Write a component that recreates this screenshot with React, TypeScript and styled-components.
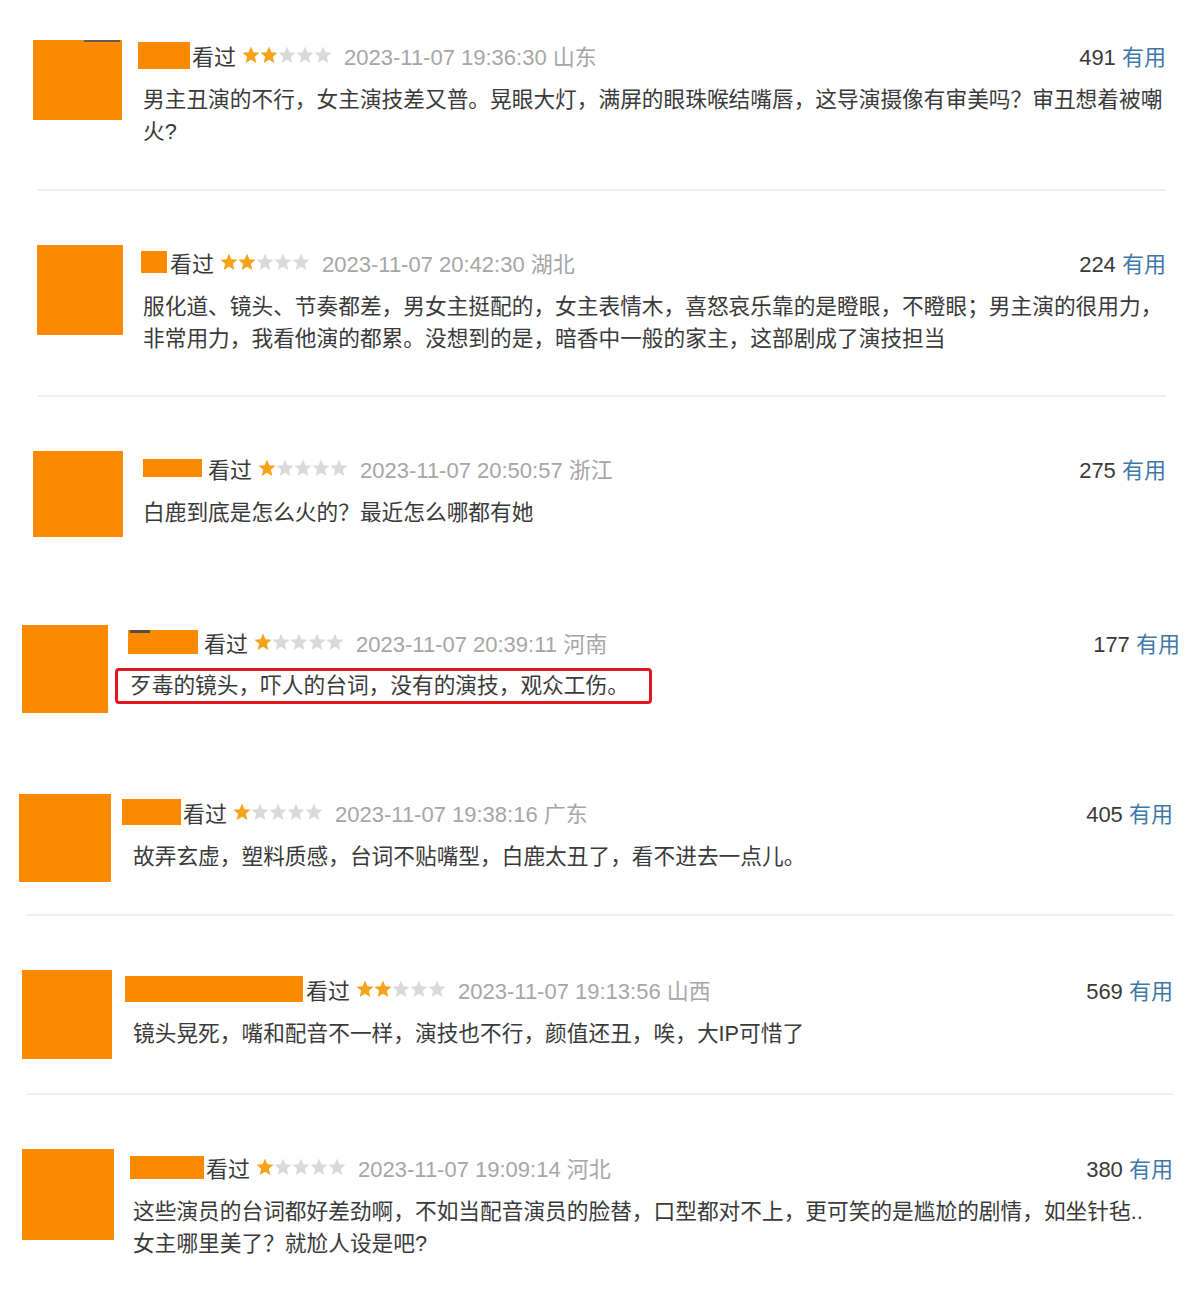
import styled, { createGlobalStyle } from "styled-components";

const GlobalStyle = createGlobalStyle`
  body {
    margin: 0;
    background: #fff;
    font-family: "Liberation Sans", "Noto Sans CJK SC", sans-serif;
  }
`;

const Page = styled.div`
  width: 1200px;
  padding-top: 40px;
  display: flex;
  flex-direction: column;
`;

const Item = styled.div<{ $height: number }>`
  height: ${(p) => p.$height}px;
  display: flex;
  flex-direction: column;
`;

const Row = styled.div<{ $left: number; $right: number }>`
  display: flex;
  align-items: flex-start;
  padding-left: ${(p) => p.$left}px;
  padding-right: ${(p) => 1200 - p.$right}px;
`;

const Avatar = styled.div<{ $w: number; $h: number; $mark?: boolean }>`
  position: relative;
  flex-shrink: 0;
  width: ${(p) => p.$w}px;
  height: ${(p) => p.$h}px;
  background: #fb8a00;

  &::before {
    content: "";
    display: ${(p) => (p.$mark ? "block" : "none")};
    position: absolute;
    top: 0;
    right: 2px;
    width: 36px;
    height: 2px;
    background: #6b5a4a;
  }
`;

const Body = styled.div<{ $gap: number; $top: number }>`
  flex: 1;
  min-width: 0;
  margin-left: ${(p) => p.$gap}px;
  padding-top: ${(p) => p.$top}px;
`;

const Header = styled.div`
  display: flex;
  align-items: center;
  height: 28px;
  font-size: 22px;
  white-space: nowrap;
`;

const NameBlock = styled.div<{ $w: number; $h: number; $gap: number; $mark?: boolean }>`
  position: relative;
  flex-shrink: 0;
  width: ${(p) => p.$w}px;
  height: ${(p) => p.$h}px;
  margin-right: ${(p) => p.$gap}px;
  background: #fb8a00;

  &::before {
    content: "";
    display: ${(p) => (p.$mark ? "block" : "none")};
    position: absolute;
    top: 0;
    left: 2px;
    width: 20px;
    height: 3px;
    background: #5c4a3a;
  }
`;

const Watched = styled.span`
  color: #3a3a3a;
  margin-right: 6px;
`;

const Stars = styled.span`
  display: inline-flex;
  margin-right: 12px;
`;

const StarIcon = styled.svg<{ $on: boolean }>`
  width: 18px;
  height: 18px;
  fill: ${(p) => (p.$on ? "#f6a21a" : "#dadada")};
`;

const DateText = styled.span`
  color: #a6a6a6;
`;

const Votes = styled.span`
  margin-left: auto;
  color: #3a3a3a;
`;

const Useful = styled.span`
  color: #3f78a8;
`;

const Content = styled.div<{ $indent: number }>`
  margin-top: 15px;
  margin-left: ${(p) => p.$indent}px;
  font-size: 21.7px;
  line-height: 32px;
  color: #3a3a3a;
  white-space: nowrap;
`;

const Line = styled.div``;

const Highlight = styled.div`
  width: fit-content;
  margin-top: -3px;
  padding: 0 20px 0 12px;
  line-height: 30px;
  border: 3px solid #e3161f;
  border-radius: 4px;
`;

const Divider = styled.div<{ $left: number; $right: number }>`
  margin-top: auto;
  margin-bottom: 54px;
  margin-left: ${(p) => p.$left}px;
  width: ${(p) => p.$right - p.$left}px;
  height: 2px;
  background: #efefef;
`;

type Review = {
  height: number;
  avatarX: number;
  avatarW: number;
  avatarH: number;
  nameX: number;
  nameW: number;
  nameH: number;
  nameGap: number;
  right: number;
  headerTop: number;
  stars: number;
  date: string;
  votes: number;
  indent: number;
  lines: string[];
  divider?: { left: number; right: number };
  highlight?: boolean;
  avatarMark?: boolean;
  nameMark?: boolean;
};

const reviews: Review[] = [
  {
    height: 205, avatarX: 33, avatarW: 89, avatarH: 80, nameX: 138, nameW: 52, nameH: 27, nameGap: 2,
    right: 1166, headerTop: 1, stars: 2, date: "2023-11-07 19:36:30 山东", votes: 491, indent: 5,
    lines: [
      "男主丑演的不行，女主演技差又普。晃眼大灯，满屏的眼珠喉结嘴唇，这导演摄像有审美吗？审丑想着被嘲",
      "火?",
    ],
    divider: { left: 38, right: 1166 },
    avatarMark: true,
  },
  {
    height: 206, avatarX: 37, avatarW: 86, avatarH: 90, nameX: 141, nameW: 26, nameH: 22, nameGap: 3,
    right: 1166, headerTop: 3, stars: 2, date: "2023-11-07 20:42:30 湖北", votes: 224, indent: 2,
    lines: [
      "服化道、镜头、节奏都差，男女主挺配的，女主表情木，喜怒哀乐靠的是瞪眼，不瞪眼；男主演的很用力，",
      "非常用力，我看他演的都累。没想到的是，暗香中一般的家主，这部剧成了演技担当",
    ],
    divider: { left: 38, right: 1166 },
  },
  {
    height: 174, avatarX: 33, avatarW: 90, avatarH: 86, nameX: 143, nameW: 59, nameH: 18, nameGap: 6,
    right: 1166, headerTop: 3, stars: 1, date: "2023-11-07 20:50:57 浙江", votes: 275, indent: 0,
    lines: ["白鹿到底是怎么火的？最近怎么哪都有她"],
  },
  {
    height: 169, avatarX: 22, avatarW: 86, avatarH: 88, nameX: 128, nameW: 70, nameH: 24, nameGap: 6,
    right: 1180, headerTop: 3, stars: 1, date: "2023-11-07 20:39:11 河南", votes: 177, indent: -13,
    lines: ["歹毒的镜头，吓人的台词，没有的演技，观众工伤。"],
    highlight: true,
    nameMark: true,
  },
  {
    height: 176, avatarX: 19, avatarW: 92, avatarH: 88, nameX: 122, nameW: 59, nameH: 26, nameGap: 2,
    right: 1173, headerTop: 4, stars: 1, date: "2023-11-07 19:38:16 广东", votes: 405, indent: 11,
    lines: ["故弄玄虚，塑料质感，台词不贴嘴型，白鹿太丑了，看不进去一点儿。"],
    divider: { left: 27, right: 1173 },
  },
  {
    height: 179, avatarX: 22, avatarW: 90, avatarH: 89, nameX: 125, nameW: 178, nameH: 26, nameGap: 3,
    right: 1173, headerTop: 5, stars: 2, date: "2023-11-07 19:13:56 山西", votes: 569, indent: 8,
    lines: ["镜头晃死，嘴和配音不一样，演技也不行，颜值还丑，唉，大IP可惜了"],
    divider: { left: 27, right: 1173 },
  },
  {
    height: 151, avatarX: 22, avatarW: 92, avatarH: 91, nameX: 130, nameW: 74, nameH: 23, nameGap: 2,
    right: 1173, headerTop: 4, stars: 1, date: "2023-11-07 19:09:14 河北", votes: 380, indent: 3,
    lines: [
      "这些演员的台词都好差劲啊，不如当配音演员的脸替，口型都对不上，更可笑的是尴尬的剧情，如坐针毡..",
      "女主哪里美了？就尬人设是吧?",
    ],
  },
];

const Star = ({ on }: { on: boolean }) => (
  <StarIcon $on={on} viewBox="0 0 24 24">
    <polygon points="12,0.8 15.2,8.4 23.4,9 17.1,14.4 19.1,22.6 12,18.2 4.9,22.6 6.9,14.4 0.6,9 8.8,8.4" />
  </StarIcon>
);

const ReviewItem = ({ r }: { r: Review }) => (
  <Item $height={r.height}>
    <Row $left={r.avatarX} $right={r.right}>
      <Avatar $w={r.avatarW} $h={r.avatarH} $mark={r.avatarMark} />
      <Body $gap={r.nameX - r.avatarX - r.avatarW} $top={r.headerTop}>
        <Header>
          <NameBlock $w={r.nameW} $h={r.nameH} $gap={r.nameGap} $mark={r.nameMark} />
          <Watched>看过</Watched>
          <Stars>
            {[0, 1, 2, 3, 4].map((i) => (
              <Star key={i} on={i < r.stars} />
            ))}
          </Stars>
          <DateText>{r.date}</DateText>
          <Votes>
            {r.votes} <Useful>有用</Useful>
          </Votes>
        </Header>
        <Content $indent={r.indent}>
          {r.highlight ? (
            <Highlight>{r.lines[0]}</Highlight>
          ) : (
            r.lines.map((l) => <Line key={l}>{l}</Line>)
          )}
        </Content>
      </Body>
    </Row>
    {r.divider && <Divider $left={r.divider.left} $right={r.divider.right} />}
  </Item>
);

const App = () => {
  return (
    <>
      <GlobalStyle />
      <Page>
        {reviews.map((r) => (
          <ReviewItem key={r.date} r={r} />
        ))}
      </Page>
    </>
  );
};

export default App;
